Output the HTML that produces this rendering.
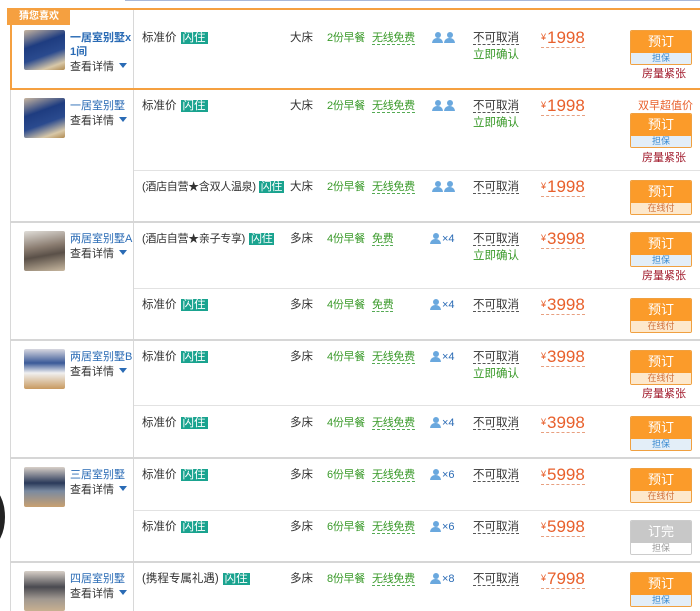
<!DOCTYPE html>
<html><head><meta charset="utf-8"><style>
*{margin:0;padding:0;box-sizing:border-box}
body{width:700px;height:611px;overflow:hidden;background:#fff;font-family:"Liberation Sans","Noto Sans CJK SC",sans-serif;font-size:11.5px;color:#333;position:relative}
.a{position:absolute;white-space:nowrap;line-height:15px;font-size:11.5px}
.hl{position:absolute;left:10px;right:0;height:1px;background:#e2e2e2}
.gl{position:absolute;left:10px;right:0;height:2px;background:#d6d6d6}
.bd{background:#1aa38f;color:#fff;padding:0 2px;margin-left:4px;font-size:11.5px}
.g{color:#3a9a2a}
.ug{border-bottom:1px dashed #5a5}
.uk{border-bottom:1px dashed #555}
.pr{color:#e8602c;font-size:17px !important;border-bottom:1px dashed #e8a080;line-height:19px !important}
.pr small{font-size:9px;vertical-align:top;color:#e8602c;margin-right:1px}
.btn{position:absolute;left:630px;width:62px;border-radius:2px;overflow:hidden;border:1px solid #f0a040}
.btn b{display:block;height:22px;line-height:22px;text-align:center;background:#fb9b2a;color:#fff;font-size:13px;font-weight:normal}
.btn i{display:block;height:11px;line-height:11px;text-align:center;font-size:9px;font-style:normal}
.db i{background:#e3eef8;color:#3a8ad0}
.zx i{background:#fde8cc;color:#d0703a}
.tight{position:absolute;left:642px;color:#a0182a;font-size:11px}
.img{position:absolute;left:24px;width:41px;height:40px;border-radius:2px}
.nm{position:absolute;left:70px;color:#2a6bb5;line-height:14px;font-size:11px}
.dt{position:absolute;left:70px;line-height:14px;font-size:11px}
.dt:after{content:"";display:inline-block;margin-left:5px;border:4px solid transparent;border-top:5px solid #2a6bb5;vertical-align:-2px}
.pp{display:inline-block;width:11px;height:11px;position:relative;vertical-align:middle;margin-right:1px}
.pp:before{content:"";position:absolute;left:3px;top:0;width:6px;height:6px;border-radius:50%;background:#6aa8de}
.pp:after{content:"";position:absolute;left:0;top:6px;width:11px;height:5px;border-radius:5px 5px 0 0;background:#6aa8de}
.x{color:#2a6bb5;font-size:11px}
.n{font-size:11px;letter-spacing:-0.3px}
</style></head><body>
<div style="position:absolute;left:125px;top:0;width:575px;height:1px;background:#a8b8d8"></div>
<div style="position:absolute;left:10px;top:8px;width:1px;height:603px;background:#d8d8d8"></div>
<div style="position:absolute;left:133px;top:8px;width:1px;height:603px;background:#d8d8d8"></div>
<div style="position:absolute;left:-25px;top:488px;width:30px;height:58px;border-radius:50%;background:#222"></div>
<div style="position:absolute;left:10px;top:8px;width:692px;height:82px;border:2px solid #f5a040;border-right:none"></div>
<div style="position:absolute;left:7px;top:8px;width:63px;height:17px;background:#f5a040;color:#fff;font-size:10px;font-weight:bold;line-height:17px;padding-left:12px">猜您喜欢</div>
<div class="gl" style="top:221px"></div><div class="gl" style="top:339px"></div><div class="gl" style="top:457px"></div><div class="gl" style="top:561px"></div>
<div class="hl" style="top:170px;left:134px"></div><div class="hl" style="top:288px;left:134px"></div><div class="hl" style="top:405px;left:134px"></div><div class="hl" style="top:510px;left:134px"></div>

<div class="img" style="top:30px;background:linear-gradient(160deg,#c9b6a0 0%,#1e3c80 35%,#2a4a8e 60%,#d8c8a8 85%,#b08a50)"></div>
<div class="nm" style="top:31px;font-weight:bold">一居室别墅x<br>1间</div><div class="dt" style="top:60px">查看详情</div>
<div class="img" style="top:98px;background:linear-gradient(160deg,#c9b6a0 0%,#1e3c80 35%,#2a4a8e 60%,#d8c8a8 85%,#b08a50)"></div>
<div class="nm" style="top:99px">一居室别墅</div><div class="dt" style="top:114px">查看详情</div>
<div class="img" style="top:231px;background:linear-gradient(170deg,#e0ddd8,#8a7c70 40%,#5a5048 60%,#c8b8a0)"></div>
<div class="nm" style="top:232px">两居室别墅A</div><div class="dt" style="top:247px">查看详情</div>
<div class="img" style="top:349px;background:linear-gradient(180deg,#d8d8e0 0%,#3a5a98 35%,#f0f0f0 60%,#c89a60)"></div>
<div class="nm" style="top:350px">两居室别墅B</div><div class="dt" style="top:365px">查看详情</div>
<div class="img" style="top:467px;background:linear-gradient(180deg,#d8d0c8,#2a3a5a 40%,#7a8aa0 60%,#c8a070)"></div>
<div class="nm" style="top:468px">三居室别墅</div><div class="dt" style="top:483px">查看详情</div>
<div class="img" style="top:571px;background:linear-gradient(180deg,#d8d0c8,#4a4a50 40%,#a09890 70%,#c8b090)"></div>
<div class="nm" style="top:572px">四居室别墅</div><div class="dt" style="top:587px">查看详情</div>

<div class="a" style="left:142px;top:31px">标准价<span class="bd">闪住</span></div>
<div class="a" style="left:290px;top:31px">大床</div><div class="a g n" style="left:327px;top:31px">2份早餐</div>
<div class="a g n" style="left:372px;top:31px"><span class="ug">无线免费</span></div>
<div class="a" style="left:432px;top:31px"><span class="pp"></span><span class="pp"></span></div>
<div class="a" style="left:473px;top:31px"><span class="uk">不可取消</span></div><div class="a g" style="left:473px;top:48px">立即确认</div>
<div class="a pr" style="left:541px;top:28px"><small>¥</small>1998</div>
<div class="btn db" style="top:30px"><b>预订</b><i>担保</i></div><div class="tight" style="top:65px">房量紧张</div>

<div class="a" style="left:142px;top:99px">标准价<span class="bd">闪住</span></div>
<div class="a" style="left:290px;top:99px">大床</div><div class="a g n" style="left:327px;top:99px">2份早餐</div>
<div class="a g n" style="left:372px;top:99px"><span class="ug">无线免费</span></div>
<div class="a" style="left:432px;top:99px"><span class="pp"></span><span class="pp"></span></div>
<div class="a" style="left:473px;top:99px"><span class="uk">不可取消</span></div><div class="a g" style="left:473px;top:116px">立即确认</div>
<div class="a pr" style="left:541px;top:96px"><small>¥</small>1998</div>
<div class="a" style="left:638px;top:99px;color:#e8602c;font-size:11px">双早超值价</div>
<div class="btn db" style="top:113px"><b>预订</b><i>担保</i></div><div class="tight" style="top:149px">房量紧张</div>

<div class="a n" style="left:142px;top:180px">(酒店自营★含双人温泉)<span class="bd" style="font-size:11px;margin-left:3px">闪住</span></div>
<div class="a" style="left:290px;top:180px">大床</div><div class="a g n" style="left:327px;top:180px">2份早餐</div>
<div class="a g n" style="left:372px;top:180px"><span class="ug">无线免费</span></div>
<div class="a" style="left:432px;top:180px"><span class="pp"></span><span class="pp"></span></div>
<div class="a" style="left:473px;top:180px"><span class="uk">不可取消</span></div>
<div class="a pr" style="left:541px;top:177px"><small>¥</small>1998</div>
<div class="btn zx" style="top:180px"><b>预订</b><i>在线付</i></div>

<div class="a n" style="left:142px;top:232px">(酒店自营★亲子专享)<span class="bd" style="font-size:11px">闪住</span></div>
<div class="a" style="left:290px;top:232px">多床</div><div class="a g n" style="left:327px;top:232px">4份早餐</div>
<div class="a g n" style="left:372px;top:232px"><span class="ug">免费</span></div>
<div class="a" style="left:430px;top:232px"><span class="pp"></span><span class="x">×4</span></div>
<div class="a" style="left:473px;top:232px"><span class="uk">不可取消</span></div><div class="a g" style="left:473px;top:249px">立即确认</div>
<div class="a pr" style="left:541px;top:229px"><small>¥</small>3998</div>
<div class="btn db" style="top:232px"><b>预订</b><i>担保</i></div><div class="tight" style="top:267px">房量紧张</div>

<div class="a" style="left:142px;top:298px">标准价<span class="bd">闪住</span></div>
<div class="a" style="left:290px;top:298px">多床</div><div class="a g n" style="left:327px;top:298px">4份早餐</div>
<div class="a g n" style="left:372px;top:298px"><span class="ug">免费</span></div>
<div class="a" style="left:430px;top:298px"><span class="pp"></span><span class="x">×4</span></div>
<div class="a" style="left:473px;top:298px"><span class="uk">不可取消</span></div>
<div class="a pr" style="left:541px;top:295px"><small>¥</small>3998</div>
<div class="btn zx" style="top:298px"><b>预订</b><i>在线付</i></div>

<div class="a" style="left:142px;top:350px">标准价<span class="bd">闪住</span></div>
<div class="a" style="left:290px;top:350px">多床</div><div class="a g n" style="left:327px;top:350px">4份早餐</div>
<div class="a g n" style="left:372px;top:350px"><span class="ug">无线免费</span></div>
<div class="a" style="left:430px;top:350px"><span class="pp"></span><span class="x">×4</span></div>
<div class="a" style="left:473px;top:350px"><span class="uk">不可取消</span></div><div class="a g" style="left:473px;top:367px">立即确认</div>
<div class="a pr" style="left:541px;top:347px"><small>¥</small>3998</div>
<div class="btn zx" style="top:350px"><b>预订</b><i>在线付</i></div><div class="tight" style="top:385px">房量紧张</div>

<div class="a" style="left:142px;top:416px">标准价<span class="bd">闪住</span></div>
<div class="a" style="left:290px;top:416px">多床</div><div class="a g n" style="left:327px;top:416px">4份早餐</div>
<div class="a g n" style="left:372px;top:416px"><span class="ug">无线免费</span></div>
<div class="a" style="left:430px;top:416px"><span class="pp"></span><span class="x">×4</span></div>
<div class="a" style="left:473px;top:416px"><span class="uk">不可取消</span></div>
<div class="a pr" style="left:541px;top:413px"><small>¥</small>3998</div>
<div class="btn db" style="top:416px"><b>预订</b><i>担保</i></div>

<div class="a" style="left:142px;top:468px">标准价<span class="bd">闪住</span></div>
<div class="a" style="left:290px;top:468px">多床</div><div class="a g n" style="left:327px;top:468px">6份早餐</div>
<div class="a g n" style="left:372px;top:468px"><span class="ug">无线免费</span></div>
<div class="a" style="left:430px;top:468px"><span class="pp"></span><span class="x">×6</span></div>
<div class="a" style="left:473px;top:468px"><span class="uk">不可取消</span></div>
<div class="a pr" style="left:541px;top:465px"><small>¥</small>5998</div>
<div class="btn zx" style="top:468px"><b>预订</b><i>在线付</i></div>

<div class="a" style="left:142px;top:520px">标准价<span class="bd">闪住</span></div>
<div class="a" style="left:290px;top:520px">多床</div><div class="a g n" style="left:327px;top:520px">6份早餐</div>
<div class="a g n" style="left:372px;top:520px"><span class="ug">无线免费</span></div>
<div class="a" style="left:430px;top:520px"><span class="pp"></span><span class="x">×6</span></div>
<div class="a" style="left:473px;top:520px"><span class="uk">不可取消</span></div>
<div class="a pr" style="left:541px;top:517px"><small>¥</small>5998</div>
<div class="btn" style="top:520px;border-color:#ccc"><b style="background:#c8c8c8">订完</b><i style="background:#fff;color:#999">担保</i></div>

<div class="a" style="left:142px;top:572px">(携程专属礼遇)<span class="bd">闪住</span></div>
<div class="a" style="left:290px;top:572px">多床</div><div class="a g n" style="left:327px;top:572px">8份早餐</div>
<div class="a g n" style="left:372px;top:572px"><span class="ug">无线免费</span></div>
<div class="a" style="left:430px;top:572px"><span class="pp"></span><span class="x">×8</span></div>
<div class="a" style="left:473px;top:572px"><span class="uk">不可取消</span></div>
<div class="a pr" style="left:541px;top:569px"><small>¥</small>7998</div>
<div class="btn db" style="top:572px"><b>预订</b><i>担保</i></div>
</body></html>
